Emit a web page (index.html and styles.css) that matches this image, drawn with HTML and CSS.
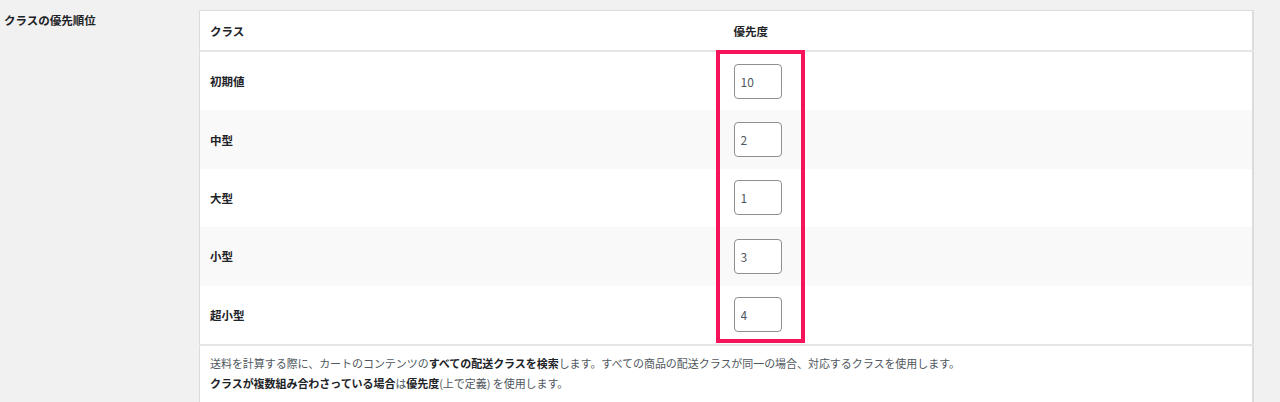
FILE: index.html
```html
<!DOCTYPE html>
<html lang="ja">
<head>
    <meta charset="UTF-8">
    <meta name="viewport" content="width=device-width, initial-scale=1.0">
    <title>クラスの優先順位</title>
    <link rel="stylesheet" href="styles.css">
</head>
<body>
    <div class="setting-row">
        <div class="setting-label">クラスの優先順位</div>
        <div class="setting-field">
            <table class="priority-table">
                <colgroup>
                    <col class="col-class">
                    <col>
                </colgroup>
                <thead>
                    <tr>
                        <th>クラス</th>
                        <th>優先度</th>
                    </tr>
                </thead>
                <tbody>
                    <tr>
                        <td class="class-name">初期値</td>
                        <td><input class="priority-input" type="text" value="10"></td>
                    </tr>
                    <tr>
                        <td class="class-name">中型</td>
                        <td><input class="priority-input" type="text" value="2"></td>
                    </tr>
                    <tr>
                        <td class="class-name">大型</td>
                        <td><input class="priority-input" type="text" value="1"></td>
                    </tr>
                    <tr>
                        <td class="class-name">小型</td>
                        <td><input class="priority-input" type="text" value="3"></td>
                    </tr>
                    <tr>
                        <td class="class-name">超小型</td>
                        <td><input class="priority-input" type="text" value="4"></td>
                    </tr>
                </tbody>
                <tfoot>
                    <tr>
                        <td colspan="2" class="description">
                            送料を計算する際に、カートのコンテンツの<strong>すべての配送クラスを検索</strong>します。すべての商品の配送クラスが同一の場合、対応するクラスを使用します。<br>
                            <strong>クラスが複数組み合わさっている場合</strong>は<strong>優先度</strong>(上で定義) を使用します。
                        </td>
                    </tr>
                </tfoot>
            </table>
            <!-- highlight box drawn over the priority column -->
            <div class="highlight"></div>
        </div>
    </div>
</body>
</html>
```

FILE: styles.css
```css
html {
    overflow: hidden;
}
body {
    margin: 0;
    background-color: #f1f1f1;
    font-family: "Noto Sans CJK JP", "Liberation Sans", sans-serif;
    color: #1d2327;
    height: 402px;
    overflow: hidden;
}
.setting-row {
    display: flex;
    padding-top: 10px;
}
.setting-label {
    width: 195px;
    padding-left: 4px;
    padding-top: 2px;
    font-size: 11.5px;
    font-weight: bold;
    line-height: 16px;
}
.setting-field {
    position: relative;
    width: 1055px;
}
.priority-table {
    width: 100%;
    border-collapse: collapse;
    background-color: #ffffff;
    border: 1px solid #dcdcde;
    border-right: 2px solid #dcdcde;
    table-layout: fixed;
}
.col-class {
    width: 524px;
}
.priority-table th {
    text-align: left;
    font-size: 11.5px;
    font-weight: bold;
    height: 39px;
    padding: 0 10px;
    border-bottom: 2px solid #e5e5e5;
    line-height: 16px;
}
.priority-table td {
    padding: 0 10px;
    height: 58.4px;
    font-size: 11.5px;
    line-height: 16px;
}
.class-name {
    font-weight: bold;
}
.priority-table tbody tr:nth-child(even) {
    background-color: #f9f9f9;
}
.priority-input {
    display: block;
    width: 48px;
    height: 35px;
    box-sizing: border-box;
    border: 1px solid #8c8f94;
    border-radius: 4px;
    padding: 0 6px;
    font-family: "Noto Sans CJK JP", "Liberation Sans", sans-serif;
    font-size: 12px;
    color: #50575e;
    background-color: #ffffff;
}
.priority-table tfoot td {
    border-top: 2px solid #e5e5e5;
}
.priority-table .description {
    font-size: 11px;
    letter-spacing: -0.05px;
    line-height: 20px;
    color: #50575e;
    vertical-align: top;
    height: auto;
    padding: 7px 10px 10px;
}
.description strong {
    color: #1d2327;
}
.highlight {
    position: absolute;
    left: 517px;
    top: 40px;
    width: 81px;
    height: 285px;
    border: 4px solid #f5135a;
}
```
